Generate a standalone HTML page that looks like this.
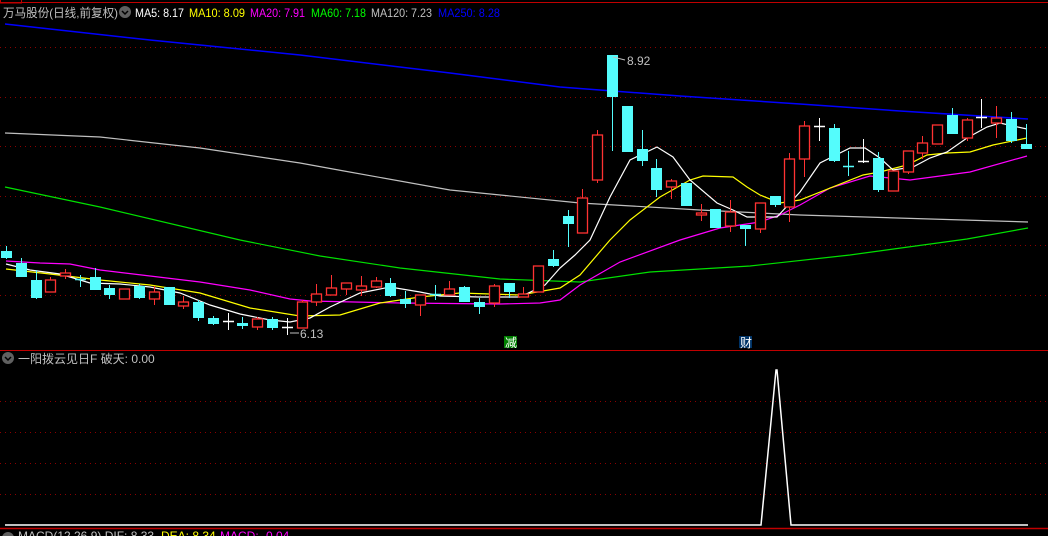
<!DOCTYPE html>
<html><head><meta charset="utf-8"><style>
html,body{margin:0;padding:0;background:#000;width:1048px;height:536px;overflow:hidden}
svg{display:block}
text{font-family:"Liberation Sans","Noto Sans CJK SC",sans-serif;font-size:12px}
</style></head><body>
<svg id="s" width="1048" height="536" xmlns="http://www.w3.org/2000/svg">
<rect width="1048" height="536" fill="#000"/>
<g stroke="#8b0000" stroke-dasharray="1,4" stroke-width="1">
<line x1="0" y1="47.5" x2="1048" y2="47.5"/><line x1="0" y1="97.5" x2="1048" y2="97.5"/>
<line x1="0" y1="146.5" x2="1048" y2="146.5"/><line x1="0" y1="196.5" x2="1048" y2="196.5"/>
<line x1="0" y1="245.5" x2="1048" y2="245.5"/><line x1="0" y1="295.5" x2="1048" y2="295.5"/>
<line x1="0" y1="401.5" x2="1048" y2="401.5"/><line x1="0" y1="432.5" x2="1048" y2="432.5"/>
<line x1="0" y1="463.5" x2="1048" y2="463.5"/><line x1="0" y1="494.5" x2="1048" y2="494.5"/>
</g>
<line x1="0" y1="2.5" x2="1048" y2="2.5" stroke="#c00000"/>
<rect x="0.5" y="-1" width="21" height="4" fill="none" stroke="#c00000"/>
<line x1="0" y1="350.5" x2="1048" y2="350.5" stroke="#c00000"/>
<line x1="0" y1="528.5" x2="1048" y2="528.5" stroke="#c00000" stroke-width="1.5"/>
<g fill="none" stroke-width="1.2">
<polyline stroke="#0000ff" stroke-width="1.5" points="5,24 150,40 300,55 450,73 560,87 680,96 800,104 900,111 1028,119"/>
<polyline stroke="#c0c0c0" points="5,133 100,137 200,148 300,163 344,171 450,190 580,203 700,210 800,215 1028,222"/>
<polyline stroke="#00e000" points="5,187 100,207 240,240 320,256 400,268 500,279 580,282 650,272 750,266 850,255 967,239 1028,228"/>
<polyline stroke="#ff00ff" points="6,261 40,263 70,264 100,270 150,276 200,282 250,290 290,299 310,301 400,303 500,304 540,303 560,300 580,285 620,262 680,240 720,228 760,222 780,215 800,205 830,188 870,176 910,180 970,172 1027,156"/>
<polyline stroke="#ffff00" points="6,269 50,274 100,280 150,285 200,293 250,308 300,316 340,315 380,303 420,297 460,293 520,295 560,288 580,275 610,240 630,220 660,197 690,180 703,176 733,177 747,187 760,195 780,203 800,200 863,175 880,172 907,165 927,155 947,153 970,152 993,145 1027,138"/>
<polyline stroke="#ffffff" points="6,264 30,270 60,274 90,283 120,284 150,287 180,293 210,305 240,314 270,320 290,322 310,318 330,307 360,293 390,287 420,292 440,296 480,297 520,297 545,285 560,268 575,255 590,240 610,197 630,160 657,147 673,157 690,180 717,203 733,210 747,217 777,217 800,192 820,163 850,148 865,148 880,158 893,170 913,167 930,158 947,152 967,138 987,127 1000,123 1013,126 1027,129"/>
</g>
<g id="c"></g>
<text x="627" y="65" fill="#c0c0c0">8.92</text>
<line x1="613" y1="57" x2="625" y2="60" stroke="#c0c0c0"/>
<text x="300" y="338" fill="#c0c0c0">6.13</text>
<line x1="290" y1="333" x2="299" y2="333" stroke="#c0c0c0"/>
<rect x="504" y="336" width="13" height="12" fill="#008000"/>
<text x="505" y="347" fill="#fff" font-size="11">减</text>
<rect x="739" y="336" width="13" height="12" fill="#003366"/>
<text x="740" y="347" fill="#fff" font-size="11">财</text>
<polyline fill="none" stroke="#fff" stroke-width="1.5" points="5,525 761,525 776,370 777,370 791,525 1028,525"/>
<text x="3" y="17" fill="#c0c0c0" textLength="115" lengthAdjust="spacingAndGlyphs">万马股份(日线,前复权)</text>
<circle cx="125" cy="12" r="6" fill="#606060"/><path d="M122 11 L125 14 L128 11" stroke="#000" fill="none" stroke-width="1.5"/>
<text x="135" y="17" fill="#fff" textLength="49" lengthAdjust="spacingAndGlyphs">MA5: 8.17</text>
<text x="189" y="17" fill="#ffff00" textLength="56" lengthAdjust="spacingAndGlyphs">MA10: 8.09</text>
<text x="250" y="17" fill="#ff00ff" textLength="55" lengthAdjust="spacingAndGlyphs">MA20: 7.91</text>
<text x="311" y="17" fill="#00ff00" textLength="55" lengthAdjust="spacingAndGlyphs">MA60: 7.18</text>
<text x="371" y="17" fill="#c0c0c0" textLength="61" lengthAdjust="spacingAndGlyphs">MA120: 7.23</text>
<text x="438" y="17" fill="#0000ff" textLength="62" lengthAdjust="spacingAndGlyphs">MA250: 8.28</text>
<circle cx="8" cy="358" r="6" fill="#606060"/><path d="M5 357 L8 360 L11 357" stroke="#000" fill="none" stroke-width="1.5"/>
<text x="18" y="363" fill="#c0c0c0">一阳拨云见日F  破天: 0.00</text>
<circle cx="8" cy="538" r="6" fill="#606060"/>
<text x="18" y="540" fill="#c0c0c0">MACD(12,26,9)  DIF: 8.33</text>
<text x="161" y="540" fill="#ffff00">DEA: 8.34</text>
<text x="220" y="540" fill="#ff00ff">MACD: -0.04</text>
</svg>
<script>
var d=[
['c',251,258,246,259],['c',263,277,258,277],['c',280,298,270,299],['r',280,292,277,292],['r',273,276,269,279],
['x',279,279,275,287],['c',277,290,268,290],['c',288,295,285,299],['r',289,299,289,299],['c',286,298,284,299],
['r',292,299,286,305],['c',287,305,287,305],['r',302,306,296,309],['c',302,318,300,321],['c',318,324,316,325],
['w',321,321,313,330],['c',323,326,317,329],['r',319,327,317,330],['c',319,328,317,330],['w',327,327,318,335],
['r',302,328,300,328],['r',294,302,284,306],['r',288,295,275,295],['r',283,289,283,295],['r',286,290,276,296],
['r',281,287,277,288],['c',283,296,278,297],['c',299,304,291,308],['r',295,305,295,316],['x',294,294,285,300],
['r',289,295,281,295],['c',287,302,286,302],['c',302,307,298,314],['r',286,303,284,307],['c',283,292,283,298],
['r',294,297,287,297],['r',266,292,266,292],['c',259,266,250,267],['c',216,224,210,247],['r',198,233,189,233],
['r',135,180,130,183],['c',55,97,55,151],['c',106,152,106,152],['c',149,161,130,166],['c',168,190,159,197],
['r',181,187,179,199],['c',183,206,183,206],['r',213,215,204,221],['c',209,228,209,228],['r',212,226,200,232],
['c',225,229,225,246],['r',203,229,203,233],['c',196,205,196,207],['r',159,207,153,222],['r',126,159,121,177],
['w',126,126,118,141],['c',128,161,124,162],['x',166,166,151,176],['w',161,161,139,163],['c',158,190,152,192],
['r',171,191,171,191],['r',151,172,151,174],['r',143,153,136,159],['r',125,144,125,144],['c',115,134,108,134],
['r',120,138,118,141],['w',117,117,99,128],['r',118,123,106,138],['c',119,141,112,143],['c',144,149,124,149]];
var g=document.getElementById('c'),h='';
for(var i=0;i<d.length;i++){var x=Math.round(6+14.78*i)+0.5,t=d[i],col;
if(t[0]=='r'){col='#ff3232';h+='<line x1="'+x+'" y1="'+t[3]+'" x2="'+x+'" y2="'+t[1]+'" stroke="'+col+'"/><line x1="'+x+'" y1="'+t[2]+'" x2="'+x+'" y2="'+t[4]+'" stroke="'+col+'"/><rect x="'+(x-5)+'" y="'+t[1]+'" width="10" height="'+Math.max(1,t[2]-t[1])+'" fill="#000" stroke="'+col+'" stroke-width="1.3"/>';}
else if(t[0]=='c'){col='#54fcfc';h+='<line x1="'+x+'" y1="'+t[3]+'" x2="'+x+'" y2="'+t[4]+'" stroke="'+col+'"/><rect x="'+(x-5.5)+'" y="'+t[1]+'" width="11" height="'+Math.max(1,t[2]-t[1])+'" fill="'+col+'"/>';}
else{col=t[0]=='w'?'#fff':'#54fcfc';h+='<line x1="'+x+'" y1="'+t[3]+'" x2="'+x+'" y2="'+t[4]+'" stroke="'+col+'"/><line x1="'+(x-5.5)+'" y1="'+(t[1]+.5)+'" x2="'+(x+5.5)+'" y2="'+(t[1]+.5)+'" stroke="'+col+'" stroke-width="1.5"/>';}}
g.innerHTML=h;
</script>
</body></html>
